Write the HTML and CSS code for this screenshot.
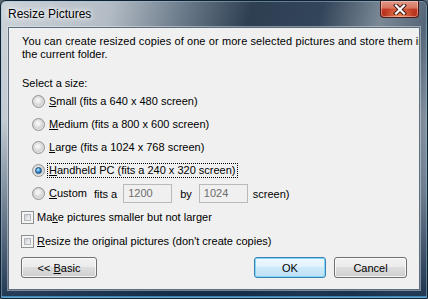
FILE: index.html
```html
<!doctype html>
<html>
<head>
    <meta charset="utf-8">
    <title>Resize Pictures</title>
    <link rel="stylesheet" href="styles.css">
</head>
<body>
<div class="window">
    <div class="titlebar">
        <span class="title">Resize Pictures</span>
        <span class="close">
            <svg width="14" height="11" viewBox="0 0 14 11">
                <path d="M3 1.5 L11 9.5 M11 1.5 L3 9.5" stroke="#3a1010" stroke-width="4" stroke-linecap="square" fill="none"/>
                <path d="M3 1.5 L11 9.5 M11 1.5 L3 9.5" stroke="#ffffff" stroke-width="2.2" stroke-linecap="square" fill="none"/>
            </svg>
        </span>
    </div>
    <div class="client">
        <p class="intro"><span class="line">You can create resized copies of one or more selected pictures and store them in</span>the current folder.</p>
        <div class="label">Select a size:</div>
        <div class="options">
            <div class="row"><span class="radio"></span><span class="text"><u>S</u>mall (fits a 640 x 480 screen)</span></div>
            <div class="row"><span class="radio"></span><span class="text"><u>M</u>edium (fits a 800 x 600 screen)</span></div>
            <div class="row"><span class="radio"></span><span class="text"><u>L</u>arge (fits a 1024 x 768 screen)</span></div>
            <div class="row"><span class="radio checked"></span><span class="text focus"><u>H</u>andheld PC (fits a 240 x 320 screen)</span></div>
            <div class="row"><span class="radio"></span><span class="text"><u>C</u>ustom</span><span class="fits">fits a</span><span class="box">1200</span><span class="by">by</span><span class="box">1024</span><span class="unit">screen)</span></div>
        </div>
        <div class="checks">
            <div class="check-row"><span class="checkbox"></span><span>Ma<u>k</u>e pictures smaller but not larger</span></div>
            <div class="check-row"><span class="checkbox"></span><span><u>R</u>esize the original pictures (don't create copies)</span></div>
        </div>
        <div class="buttons">
            <button class="btn btn-basic">&lt;&lt; <u>B</u>asic</button>
            <span class="spacer"></span>
            <button class="btn btn-ok default">OK</button>
            <button class="btn btn-cancel">Cancel</button>
        </div>
    </div>
</div>
</body>
</html>
```

FILE: styles.css
```css
body {margin: 0; padding: 0; background: #5a6876; font-family: 'Liberation Sans', Arial, sans-serif; font-size: 11px; color: #000;}
u {text-decoration: underline; text-underline-offset: 1px;}

.window {width: 428px; height: 299px; box-sizing: border-box; display: flex; flex-direction: column; padding: 0 7px 8px 7px;
    border: 1px solid #14202c; border-radius: 6px 6px 2px 2px;
    background:
        linear-gradient(to bottom, rgba(18, 42, 70, 0) 0%, rgba(18, 42, 70, 0) 40%, rgba(18, 42, 70, 0.9) 100%),
        linear-gradient(105deg, #ccd3d9 0%, #b3bcc5 22%, #647484 38%, #2e3f52 50%, #33455a 64%, #7b8996 76%, #566779 85%, #a4afba 94%, #8f9ca8 100%);
    box-shadow: inset 0 0 0 1px rgba(150, 200, 235, 0.45), inset 0 -2px 0 rgba(70, 170, 225, 0.7);}

.titlebar {height: 26px; display: flex; align-items: flex-start; justify-content: space-between;}
.title {font-size: 12px; line-height: 12px; margin-top: 7px; color: #000;
    text-shadow: 0 0 6px rgba(255, 255, 255, 0.95), 0 0 10px rgba(255, 255, 255, 0.8), 0 0 3px rgba(255, 255, 255, 0.9);}
.close {width: 39px; height: 17px; margin-right: 1px; box-sizing: border-box; display: flex; align-items: center; justify-content: center;
    border: 1px solid #4b1a16; border-top: none; border-radius: 0 0 4px 4px;
    background:
        radial-gradient(ellipse at 50% 100%, rgba(255, 160, 100, 0.8) 0%, rgba(255, 140, 90, 0) 60%),
        linear-gradient(to bottom, #e09a8a 0%, #d4735f 45%, #c23a25 50%, #b22e1c 100%);
    box-shadow: inset 0 0 0 1px rgba(255, 220, 210, 0.45);}

.client {flex: 1; background: #f0f0f0; border: 1px solid #5f6e7d; overflow: hidden; padding: 7px 12px 0 12px;
    box-shadow: 0 0 0 1px rgba(230, 238, 245, 0.45);}

.intro {margin: 0 0 0 1px; line-height: 13px;}
.intro .line {display: block; white-space: nowrap; letter-spacing: 0.1px;}
.label {margin: 16px 0 0 1px; line-height: 13px;}

.options {padding-left: 11px;}
.row {height: 23px; display: flex; align-items: center; white-space: nowrap;}
.row .text {border: 1px solid transparent; padding: 0 1px; line-height: 13px; margin-left: 2px;}
.row .text.focus {border: 1px dotted #000;}
.fits {margin-left: 5px;}
.box {width: 49px; height: 19px; box-sizing: border-box; border: 1px solid #b9b9b9; background: #f0f0f0; color: #6d6d6d; padding-left: 4px; line-height: 17px; margin-left: 6px;}
.by {margin-left: 8px;}
.by + .box {margin-left: 7px;}
.unit {margin-left: 5px;}

.radio {width: 13px; height: 13px; box-sizing: border-box; border-radius: 50%; border: 1px solid #929292; position: relative; flex: none;
    background: radial-gradient(circle at 45% 40%, #fbfbfb 0, #eeeeee 2px, #d2d2d2 5px, #e4e4e4 6px);}
.radio.checked::after {content: ''; position: absolute; left: 2px; top: 2px; width: 7px; height: 7px; box-sizing: border-box; border-radius: 50%;
    border: 1px solid #1c4a78; background: radial-gradient(circle at 40% 35%, #bfeaff 0, #3a9ae0 2px, #0f4f8c 4px);}

.checks {margin-top: 0;}
.check-row {height: 24px; display: flex; align-items: center; white-space: nowrap;}
.checkbox {width: 13px; height: 13px; box-sizing: border-box; border: 1px solid #8e8f8f; background: #f4f4f4; position: relative; margin-right: 3px; flex: none;}
.checkbox::after {content: ''; position: absolute; left: 2px; top: 2px; right: 2px; bottom: 2px; border: 1px solid #b2b6bb;
    background: linear-gradient(135deg, #c9cdd3 0%, #e4e6e9 60%, #f6f6f6 100%);}

.buttons {display: flex; margin-top: 4px;}
.spacer {flex: 1;}
.btn {height: 21px; padding: 0; font-family: 'Liberation Sans', Arial, sans-serif; font-size: 11px; color: #000;
    border: 1px solid #707070; border-radius: 3px;
    background: linear-gradient(to bottom, #f2f2f2 0%, #ebebeb 50%, #dddddd 50%, #cfcfcf 100%);
    box-shadow: inset 0 0 0 1px rgba(255, 255, 255, 0.75);}
.btn-basic {width: 76px;}
.btn-ok {width: 72px; margin-right: 8px;}
.btn-cancel {width: 73px;}
.btn.default {border-color: #3c7fb1;
    background: linear-gradient(to bottom, #eef7fd 0%, #e0f1fb 50%, #cde9f9 50%, #bfe1f5 100%);
    box-shadow: inset 0 0 0 1px #7fd8f8;}
```
